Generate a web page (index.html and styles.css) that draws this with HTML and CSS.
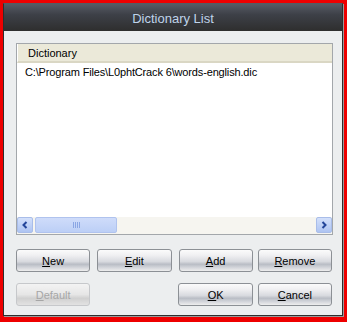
FILE: index.html
```html
<!DOCTYPE html>
<html>
<head>
<meta charset="utf-8">
<link rel="stylesheet" href="styles.css">
</head>
<body>
<div class="window">
  <div class="titlebar">Dictionary List</div>
  <div class="content">
    <div class="listbox">
      <div class="header"><span class="col">Dictionary</span></div>
      <div class="rows">
        <div class="row">C:\Program Files\L0phtCrack 6\words-english.dic</div>
      </div>
      <div class="hscroll">
        <div class="arrow"><svg width="8" height="8" viewBox="0 0 8 8"><path d="M5.5 1 L2.5 4 L5.5 7" fill="none" stroke="#23459a" stroke-width="2"/></svg></div>
        <div class="thumb"><span class="grip"></span></div>
        <div class="track"></div>
        <div class="arrow"><svg width="8" height="8" viewBox="0 0 8 8"><path d="M2.5 1 L5.5 4 L2.5 7" fill="none" stroke="#23459a" stroke-width="2"/></svg></div>
      </div>
    </div>
    <div class="btnrow first">
      <button class="btn"><u>N</u>ew</button>
      <button class="btn"><u>E</u>dit</button>
      <button class="btn"><u>A</u>dd</button>
      <button class="btn r"><u>R</u>emove</button>
    </div>
    <div class="btnrow">
      <button class="btn disabled"><u>D</u>efault</button>
      <span class="spacer"></span>
      <button class="btn"><u>O</u>K</button>
      <button class="btn r"><u>C</u>ancel</button>
    </div>
  </div>
</div>
</body>
</html>
```
FILE: styles.css
```css
html, body {
  margin: 0;
  padding: 0;
}
body {
  background: #ee0000;
  width: 347px;
  height: 322px;
  overflow: hidden;
  font-family: "Liberation Sans", Arial, sans-serif;
}
.window {
  margin: 3px 0 0 3px;
  width: 340px;
  height: 313px;
  box-sizing: border-box;
  border: 1px solid #2e2e2e;
  border-top-color: #555a62;
  background: #eceeef;
  box-shadow: 1px 1px 0 #9a9a9a;
  display: flex;
  flex-direction: column;
}
.titlebar {
  height: 27px;
  flex: none;
  background: linear-gradient(#565b64 0%, #3d4047 40%, #2e2e2e 100%);
  color: #bfd3ea;
  font-size: 13px;
  display: flex;
  align-items: center;
  justify-content: center;
  padding-top: 1px;
  box-sizing: border-box;
}
.content {
  padding: 12px 9px 0 12px;
}
.listbox {
  width: 317px;
  height: 192px;
  box-sizing: border-box;
  border: 1px solid #a3a7ab;
  background: #fff;
  display: flex;
  flex-direction: column;
}
.header {
  height: 19px;
  flex: none;
  background: #ebe9d9;
  border-bottom: 2px solid #dad7c4;
  box-sizing: border-box;
  font-size: 11px;
  color: #000;
  display: flex;
  align-items: center;
  padding-left: 10px;
  border-left: 1px solid #fff;
}
.rows {
  flex: 1;
  font-size: 11px;
  color: #000;
}
.row {
  padding: 3px 0 0 8px;
  height: 14px;
  letter-spacing: -0.15px;
}
.hscroll {
  height: 17px;
  flex: none;
  display: flex;
  align-items: stretch;
  background: #f6f5f0;
  box-sizing: border-box;
  padding: 0 0 1px 0;
}
.arrow {
  width: 16px;
  flex: none;
  background: linear-gradient(#d3e0fb, #aec4f2);
  border: 1px solid #a9bde9;
  border-radius: 2px;
  box-sizing: border-box;
  display: flex;
  align-items: center;
  justify-content: center;
}
.thumb {
  width: 82px;
  flex: none;
  margin-left: 2px;
  background: linear-gradient(#cfdcfa, #bccff6);
  border: 1px solid #b0c3ee;
  border-radius: 2px;
  box-sizing: border-box;
  display: flex;
  align-items: center;
  justify-content: center;
}
.grip {
  width: 7px;
  height: 6px;
  background: repeating-linear-gradient(90deg, #8aa6e4 0 1px, transparent 1px 2px);
}
.track {
  flex: 1;
}
.btnrow {
  display: flex;
  gap: 7px;
  margin-top: 14px;
  width: 316px;
}
.btnrow + .btnrow {
  margin-top: 11px;
}
.spacer {
  width: 75px;
}
.btn {
  width: 75px;
  height: 23px;
  margin: 0;
  padding: 0;
  box-sizing: border-box;
  border: 1px solid #8c9095;
  border-radius: 3px;
  background: linear-gradient(#fbfbfb 0%, #f0f0f2 25%, #d8dadf 55%, #b9bdc5 68%, #d5d7dc 85%, #eeeeee 100%);
  font-family: "Liberation Sans", Arial, sans-serif;
  font-size: 11px;
  color: #000;
  display: flex;
  align-items: center;
  justify-content: center;
}
.btn.r {
  margin-left: -2px;
}
.btn.disabled {
  color: #a6a6a6;
  border-color: #c6c8cb;
  background: linear-gradient(#f3f3f3 0%, #e6e6e6 50%, #d0d0d0 68%, #e2e2e2 100%);
}
```
